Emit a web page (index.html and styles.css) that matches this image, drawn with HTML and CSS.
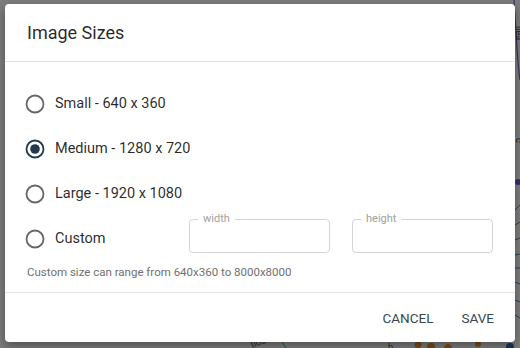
FILE: index.html
```html
<!DOCTYPE html>
<html>
<head>
<meta charset="utf-8">
<link rel="stylesheet" href="styles.css">
</head>
<body>
<svg class="backdrop" width="520" height="348" viewBox="0 0 520 348">
  <path d="M514 0 C 516 30, 517 60, 520 80" stroke="#3d2f63" stroke-width="1.2" fill="none"/>
  <text x="0" y="0" transform="translate(516,26) rotate(90)" font-family="Roboto" font-size="9" fill="#222">ilea</text>
  <text x="0" y="0" transform="translate(516,138) rotate(90)" font-family="Roboto" font-size="9" fill="#222">c</text>
  <circle cx="518" cy="182" r="3" fill="#3a2d6a"/>
  <path d="M515 210 L520 205 M515 225 L520 222 M515 240 L520 238 M515 255 L520 254 M515 268 L520 268 M515 282 L520 284 M515 300 L520 302 M515 315 L520 318" stroke="#234466" stroke-width="1"/>
  <text x="0" y="0" transform="translate(252,348) rotate(-20)" font-family="Roboto" font-size="9" fill="#222">tious</text>
  <path d="M282 342 L286 348" stroke="#2a6b2a" stroke-width="1.2"/>
  <text x="388" y="350" font-family="Roboto" font-size="9" fill="#222">b</text>
  <circle cx="418" cy="345" r="3.5" fill="#7a4a14"/>
  <circle cx="431" cy="347" r="4" fill="#7a4a14"/>
  <circle cx="448" cy="348" r="4" fill="#7a4a14"/>
  <circle cx="478" cy="344" r="3" fill="#7a4a14"/>
  <circle cx="510" cy="347" r="4" fill="#17365a"/>
</svg>
<div class="dialog">
  <div class="header">Image Sizes</div>
  <div class="content">
    <div class="row">
      <svg class="radio" width="20" height="20" viewBox="0 0 20 20"><circle cx="10" cy="10" r="8.5" fill="none" stroke="#666" stroke-width="1.8"/></svg>
      <span class="label">Small - 640 x 360</span>
    </div>
    <div class="row">
      <svg class="radio" width="20" height="20" viewBox="0 0 20 20"><circle cx="10" cy="10" r="8.5" fill="none" stroke="#233a4e" stroke-width="1.8"/><circle cx="10" cy="10" r="4.8" fill="#233a4e"/></svg>
      <span class="label">Medium - 1280 x 720</span>
    </div>
    <div class="row">
      <svg class="radio" width="20" height="20" viewBox="0 0 20 20"><circle cx="10" cy="10" r="8.5" fill="none" stroke="#666" stroke-width="1.8"/></svg>
      <span class="label">Large - 1920 x 1080</span>
    </div>
    <div class="row">
      <svg class="radio" width="20" height="20" viewBox="0 0 20 20"><circle cx="10" cy="10" r="8.5" fill="none" stroke="#666" stroke-width="1.8"/></svg>
      <span class="label custom">Custom</span>
      <div class="field"><span class="field-label">width</span></div>
      <div class="field field-second"><span class="field-label">height</span></div>
    </div>
    <div class="helper">Custom size can range from 640x360 to 8000x8000</div>
  </div>
  <div class="footer">
    <span class="btn">CANCEL</span>
    <span class="btn">SAVE</span>
  </div>
</div>
</body>
</html>
```
FILE: styles.css
```css
html, body {
  margin: 0;
  padding: 0;
}
body {
  width: 520px;
  height: 348px;
  overflow: hidden;
  background: #7b7b7b;
  position: relative;
  font-family: Roboto, "Liberation Sans", sans-serif;
}
.backdrop {
  position: absolute;
  left: 0;
  top: 0;
}
.dialog {
  position: relative;
  margin: 4px 0 0 5px;
  width: 510px;
  height: 338px;
  background: #fff;
  border-radius: 4px;
  box-shadow: 0 4px 10px rgba(0,0,0,0.35);
  display: flex;
  flex-direction: column;
}
.header {
  height: 58px;
  box-sizing: border-box;
  padding: 18px 0 0 22px;
  font-size: 18px;
  color: rgba(0,0,0,0.85);
  border-bottom: 1px solid #e2e2e2;
}
.content {
  padding: 19px 0 0 20px;
  height: 231px;
  box-sizing: border-box;
  border-bottom: 1px solid #e2e2e2;
}
.row {
  height: 45px;
  display: flex;
  align-items: center;
}
.radio {
  flex: none;
  margin-right: 10px;
}
.label {
  font-size: 14.5px;
  color: rgba(0,0,0,0.85);
}
.custom {
  width: 134px;
}
.field {
  position: relative;
  width: 141px;
  height: 34px;
  box-sizing: border-box;
  border: 1px solid #d4d4d4;
  border-radius: 4px;
  margin-bottom: 5px;
}
.field-second {
  margin-left: 22px;
}
.field-label {
  position: absolute;
  left: 8px;
  top: -8px;
  padding: 0 5px;
  background: #fff;
  font-size: 11px;
  line-height: 14px;
  color: #a0a0a0;
}
.helper {
  margin: 4px 0 0 2px;
  font-size: 11.5px;
  color: #6f6f6f;
}
.footer {
  flex: 1;
  display: flex;
  justify-content: flex-end;
  align-items: center;
  gap: 28px;
  padding: 0 21px 0 0;
}
.btn {
  font-size: 13.5px;
  letter-spacing: 0;
  color: #37474f;
  font-weight: 400;
}
```
